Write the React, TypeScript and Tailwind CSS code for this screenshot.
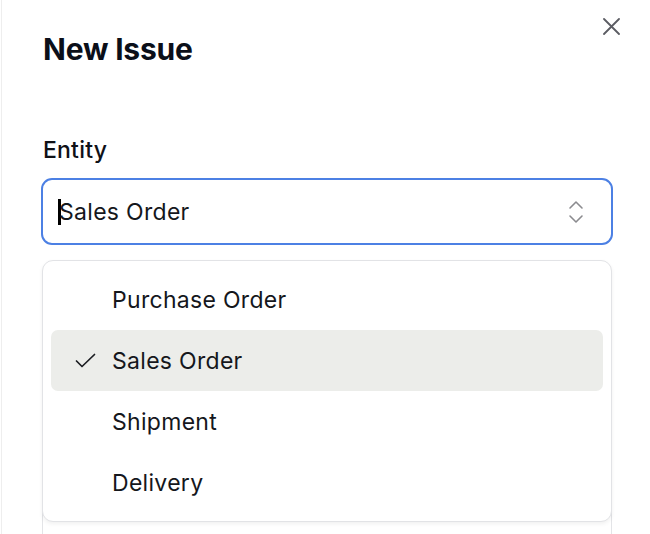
import { useState } from "react";

const options = ["Purchase Order", "Sales Order", "Shipment", "Delivery"];

function CloseIcon() {
  return (
    <svg width="17" height="17" viewBox="0 0 17 17" fill="none" stroke="#5b5c63" strokeWidth="1.8" strokeLinecap="round">
      <path d="M1 1l15 15M16 1L1 16" />
    </svg>
  );
}

function UpDownIcon() {
  return (
    <svg width="16" height="24" viewBox="0 0 16 24" fill="none" stroke="#8b8b8f" strokeWidth="1.6" strokeLinecap="round" strokeLinejoin="round">
      <path d="M2 8l6-6 6 6" />
      <path d="M2 16l6 6 6-6" />
    </svg>
  );
}

function CheckIcon() {
  return (
    <svg width="21" height="15" viewBox="0 0 21 15" fill="none" stroke="#1b1d22" strokeWidth="1.7" strokeLinecap="round" strokeLinejoin="round">
      <path d="M1.5 8l5.5 5.5L19.5 1.5" />
    </svg>
  );
}

export default function App() {
  const [selected, setSelected] = useState("Sales Order");

  return (
    <div
      className="relative h-[534px] w-[650px] overflow-hidden bg-white ml-px border-l border-[#eeeeee] text-[#111318]"
      style={{ fontFamily: "Inter, 'Noto Sans', sans-serif" }}
    >
      {/* Close */}
      <button className="absolute right-[31px] top-[18px] flex h-[17px] w-[17px] items-center justify-center">
        <CloseIcon />
      </button>

      <div className="pl-[39px] pr-[38px] pt-[31px]">
        <h2 className="text-[30px] leading-[36px] font-bold tracking-[-0.2px] text-[#0b0f19] pl-[2px]">New Issue</h2>

        <div className="mt-[69px]">
          <label className="block pl-[2px] text-[23px] leading-[28px] font-medium tracking-[0.2px] text-[#0f1117]">Entity</label>

          <div className="relative mt-[14px]">
            <div className="flex h-[67px] items-center justify-between rounded-[11px] border-2 border-[#4c80e4] pl-[15px] pr-[27px]">
              <div className="flex items-center text-[23px] leading-[28px] tracking-[0.3px] text-[#15171c]">
                <span className="-mr-[2px] inline-block h-[26px] w-[3px] bg-black" />
                <span>{selected}</span>
              </div>
              <UpDownIcon />
            </div>

            {/* Next field, sitting under the open list */}
            <div className="mt-[28px] h-[300px] rounded-[11px] border border-[#e3e4e7] mx-px" />

            {/* Listbox */}
            <div className="absolute left-px right-px top-[82px] rounded-[11px] border border-[#e2e3e6] bg-white px-[8px] py-[8px] shadow-[0_2px_4px_rgba(0,0,0,0.06)]">
              {options.map((opt) => {
                const active = opt === selected;
                return (
                  <div
                    key={opt}
                    onClick={() => setSelected(opt)}
                    className={
                      active
                        ? "flex h-[61px] cursor-pointer items-center rounded-[7px] bg-[#ecedea] text-[23px] leading-[28px] tracking-[0.3px] text-[#15171c]"
                        : "flex h-[61px] cursor-pointer items-center rounded-[7px] text-[23px] leading-[28px] tracking-[0.3px] text-[#15171c]"
                    }
                  >
                    <span className="flex w-[61px] justify-start pl-[24px]">{active && <CheckIcon />}</span>
                    <span>{opt}</span>
                  </div>
                );
              })}
            </div>
          </div>
        </div>
      </div>
    </div>
  );
}
